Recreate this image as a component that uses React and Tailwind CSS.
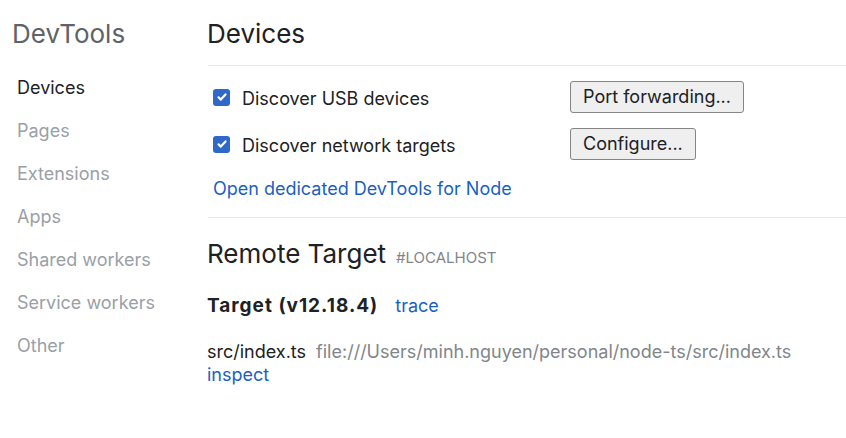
import { useState } from 'react'

const navItems = ['Devices', 'Pages', 'Extensions', 'Apps', 'Shared workers', 'Service workers', 'Other']

function Check({ checked, onChange }) {
  return (
    <button type="button" onClick={onChange}
      className={`w-[17px] h-[17px] rounded-[3px] flex items-center justify-center flex-shrink-0 ${checked ? 'bg-[#2f68c9]' : 'bg-white border border-[#767676]'}`}>
      {checked && (
        <svg className="w-[12px] h-[12px]" viewBox="0 0 12 12" fill="none" stroke="white" strokeWidth={2.2} strokeLinecap="round" strokeLinejoin="round">
          <path d="M2.5 6.3l2.3 2.3L9.5 3.4" />
        </svg>
      )}
    </button>
  )
}

function Btn({ children }) {
  return (
    <button type="button" className="h-[32px] px-[12px] bg-[#efefef] border border-[#858585] rounded-[3px] text-[18px] text-[#202124] leading-none">
      {children}
    </button>
  )
}

export default function App() {
  const [usb, setUsb] = useState(true)
  const [net, setNet] = useState(true)

  return (
    <div className="w-[846px] h-[438px] bg-white flex font-['Inter','Liberation_Sans',Arial,sans-serif] overflow-hidden">
      <aside className="w-[207px] flex-shrink-0 pt-[17px]">
        <div className="pl-[12px] text-[26px] text-[#5f6368] leading-[34px]">DevTools</div>
        <nav className="mt-[26px] flex flex-col">
          {navItems.map((n, i) => (
            <div key={n} className={`pl-[17px] h-[43px] text-[18px] leading-[22px] ${i === 0 ? 'text-[#202124]' : 'text-[#9aa0a6]'}`}>{n}</div>
          ))}
        </nav>
      </aside>

      <main className="flex-1 pt-[17px]">
        <h1 className="text-[26px] text-[#202124] leading-[34px]">Devices</h1>
        <div className="mt-[14px] ml-[1px] border-t border-[#e8e8e8]" />

        <div className="pl-[6px] pt-[15px] flex flex-col">
          <div className="flex items-center h-[32px]">
            <Check checked={usb} onChange={() => setUsb(!usb)} />
            <span className="ml-[12px] w-[328px] text-[18px] leading-[22px] text-[#202124] mt-[3px]">Discover USB devices</span>
            <Btn>Port forwarding...</Btn>
          </div>
          <div className="flex items-center h-[32px] mt-[15px]">
            <Check checked={net} onChange={() => setNet(!net)} />
            <span className="ml-[12px] w-[328px] text-[18px] leading-[22px] text-[#202124] mt-[3px]">Discover network targets</span>
            <Btn>Configure...</Btn>
          </div>
          <a href="#" className="mt-[17px] text-[18px] text-[#1a5fc4] leading-[24px]">Open dedicated DevTools for Node</a>
        </div>
        <div className="mt-[16px] ml-[1px] border-t border-[#e8e8e8]" />

        <div className="mt-[19px] flex items-baseline">
          <h2 className="text-[26px] text-[#202124] leading-[34px]">Remote Target</h2>
          <span className="ml-[10px] text-[15px] text-[#80868b]">#LOCALHOST</span>
        </div>
        <div className="mt-[23px] flex items-baseline">
          <span className="text-[19px] leading-[24px] font-bold tracking-[1px] text-[#202124]">Target (v12.18.4)</span>
          <a href="#" className="ml-[17px] text-[18px] leading-[24px] text-[#1a5fc4]">trace</a>
        </div>
        <div className="mt-[22px] flex items-baseline">
          <span className="text-[18px] text-[#202124] leading-[23px]">src/index.ts</span>
          <span className="ml-[10px] text-[18px] text-[#80868b] leading-[23px]">file:///Users/minh.nguyen/personal/node-ts/src/index.ts</span>
        </div>
        <a href="#" className="block text-[18px] text-[#1a5fc4] leading-[23px]">inspect</a>
      </main>
    </div>
  )
}
